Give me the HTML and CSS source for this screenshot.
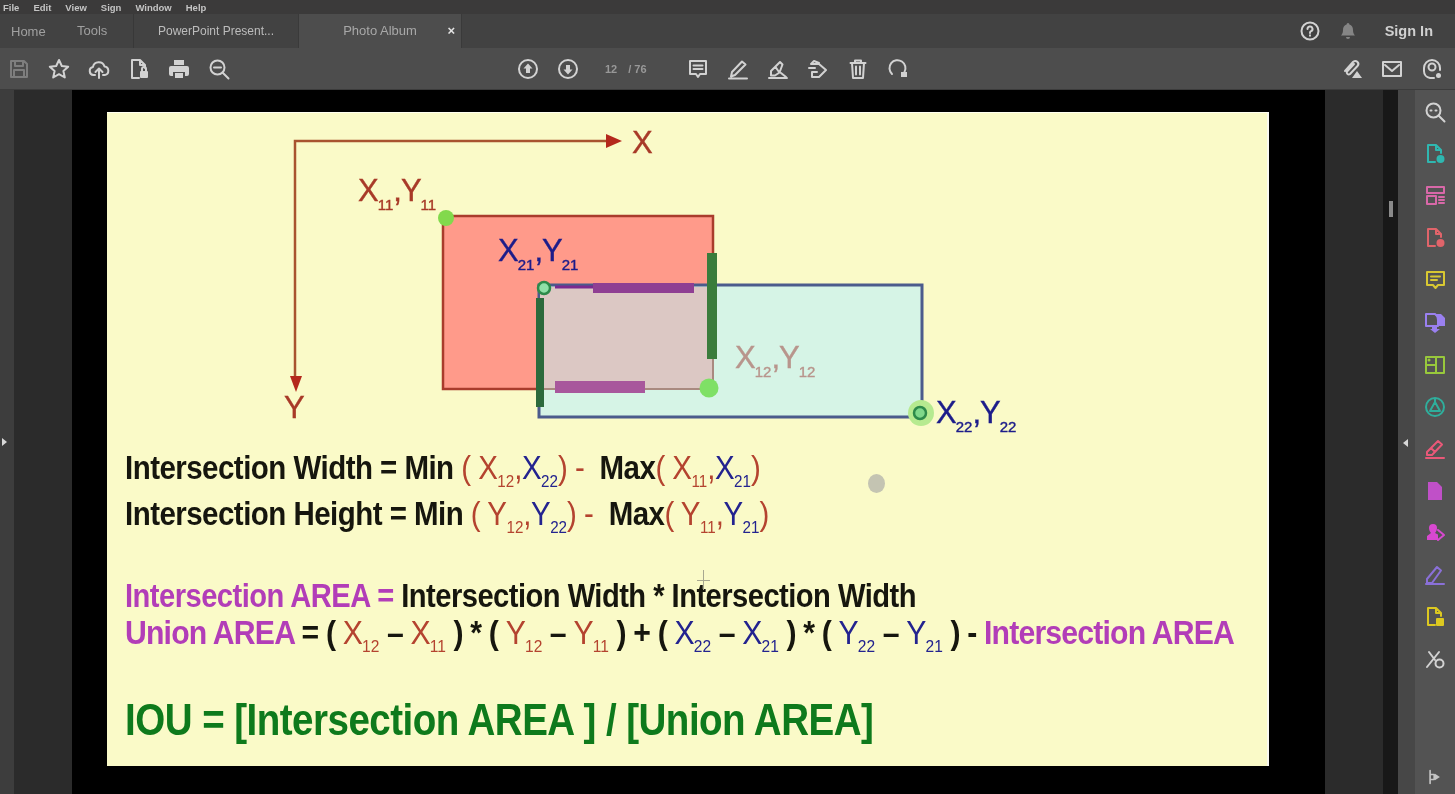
FILE: index.html
```html
<!DOCTYPE html>
<html lang="en">
<head>
    <meta charset="UTF-8">
    <title>Photo Album</title>
    <link rel="stylesheet" href="styles.css">
</head>
<body>
<div class="app">
    <div class="menubar">
        <span>File</span><span>Edit</span><span>View</span><span>Sign</span><span>Window</span><span>Help</span>
    </div>

    <div class="tabbar">
        <span class="nav-link">Home</span>
        <span class="nav-link">Tools</span>
        <div class="tab">PowerPoint Present...</div>
        <div class="tab tab-active">Photo Album<span class="tab-close">&times;</span></div>
        <div class="tab-right">
            <svg class="ic" viewBox="0 0 22 22"><circle cx="11" cy="11" r="8.5"/><path d="M8.5 9a2.5 2.5 0 1 1 3.6 2.2c-.8.4-1.1.9-1.1 1.8M11 15.2v.6"/></svg>
            <svg class="ic ic-bell" viewBox="0 0 22 22"><path class="solid" d="M11 3a1.400 1.400 0 0 1 1.400 1.500c2.400.7 3.600 2.700 3.600 5.500 0 3 .8 4 2 5.500H4c1.200-1.500 2-2.500 2-5.500 0-2.800 1.200-4.800 3.600-5.500A1.400 1.400 0 0 1 11 3zM9 17h4a2 2 0 0 1-4 0z"/></svg>
            <span class="sign-in">Sign In</span>
        </div>
    </div>

    <div class="toolbar">
        <div class="tool-group tool-left">
            <svg class="ic dim" viewBox="0 0 22 22"><path d="M3 3h13l3 3v13H3zM7 3v5h8V3M6 19v-7h10v7"/></svg>
            <svg class="ic" viewBox="0 0 22 22"><path d="M11 2l2.800 6 6.400.7-4.800 4.300 1.400 6.500L11 16.200l-5.800 3.300 1.400-6.500L1.800 8.700 8.200 8z"/></svg>
            <svg class="ic" viewBox="0 0 22 22"><path d="M7 17H5.500a4 4 0 0 1-.6-7.900 6 6 0 0 1 11.600-.6 4.300 4.300 0 0 1 .3 8.500H15M11 20v-9M7.500 14l3.500-3.500 3.500 3.500"/></svg>
            <svg class="ic" viewBox="0 0 22 22"><path d="M11 20H4V2h8l5 5v3M12 2v5h5"/><rect class="solid" x="12" y="13" width="8" height="7" rx="1"/><path d="M14 13v-2a2 2 0 0 1 4 0v2"/></svg>
            <svg class="ic" viewBox="0 0 22 22"><path class="solid" d="M6 2h10v5H6zM3 8h16a2 2 0 0 1 2 2v6a2 2 0 0 1-2 2h-2v-4H5v4H3a2 2 0 0 1-2-2v-6a2 2 0 0 1 2-2zM7 15h8v5H7z"/></svg>
            <svg class="ic" viewBox="0 0 22 22"><circle cx="9.500" cy="9.500" r="7"/><path d="M14.500 14.500L20.500 20.500M6 9.500h7"/></svg>
        </div>
        <div class="tool-group tool-center">
            <svg class="ic" viewBox="0 0 22 22"><circle cx="11" cy="11" r="9"/><path class="solid" d="M11 5.500l4.500 5H13v4.500H9v-4.500H6.500z"/></svg>
            <svg class="ic" viewBox="0 0 22 22"><circle cx="11" cy="11" r="9"/><path class="solid" d="M11 16.500l-4.500-5H9V7h4v4.500h2.500z"/></svg>
            <div class="page-count"><span>12</span><span>/ 76</span></div>
            <svg class="ic" viewBox="0 0 22 22"><path d="M3 3h16v13h-6l-2 3-2-3H3zM6.500 7.500h9M6.500 11h9"/></svg>
            <svg class="ic" viewBox="0 0 22 22"><path d="M5 14L15 3.500l3.500 3L8 17l-4 1.500zM2 20.500h18"/></svg>
            <svg class="ic" viewBox="0 0 22 22"><path d="M4 13l9-9 2.500 2.500-3 8-4.500 3H4zM8.500 9L12 14M14 15l5 4M2 20h18"/></svg>
            <svg class="ic" viewBox="0 0 22 22"><path d="M4 6h8l7 6-7 7H5v-5M4 6l3-3 5 2M2 10h6M5 14h5"/></svg>
            <svg class="ic" viewBox="0 0 22 22"><path d="M3.500 5h15M8 5V2.500h6V5M5 5l1 15h10l1-15M9 8.500v8M13 8.500v8"/></svg>
            <svg class="ic" viewBox="0 0 22 22"><path d="M5 16a8 8 0 1 1 12.500-2"/><path class="solid" d="M14 14h6v5h-6z"/></svg>
        </div>
        <div class="tool-group tool-right">
            <svg class="ic" viewBox="0 0 22 22"><path d="M4 13L12 4a3 3 0 0 1 4.500 4L9 16a2 2 0 0 1-3-2.500l7-7.500"/><path class="solid" d="M11 20l5-7 5 7z"/></svg>
            <svg class="ic" viewBox="0 0 22 22"><rect x="2" y="4" width="18" height="14"/><path d="M4 7l7 6 7-6"/></svg>
            <svg class="ic" viewBox="0 0 22 22"><path d="M13 20H9a7 7 0 0 1-6-7V10a8 8 0 0 1 16 0v2"/><circle cx="11" cy="9" r="3.500"/><circle class="solid" cx="17.500" cy="17.500" r="2.500"/></svg>
        </div>
    </div>

    <div class="workspace">
        <div class="rail-left"><span class="arrow-right"></span></div>
        <div class="gutter"></div>
        <div class="page-well">
            <div class="slide">
                <svg class="diagram" viewBox="107 112 1162 322">
                    <rect x="443" y="216" width="270" height="173" fill="#ff9a8a" stroke="#a93c2c" stroke-width="2.500"/>
                    <rect x="539" y="285" width="383" height="132" fill="#d6f4e6" stroke="#4b5b8c" stroke-width="3"/>
                    <rect x="540" y="287" width="173" height="102" fill="#dcc8c4"/>
                    <path d="M540 389H713V287" fill="none" stroke="#a98a80" stroke-width="2"/>
                    <path d="M295 385V141H612" fill="none" stroke="#a8532f" stroke-width="2.500"/>
                    <path d="M606 134l16 7-16 7zM290 376h12l-6 16z" fill="#b4281c"/>
                    <path d="M555 287H693" stroke="#7a2a90" stroke-width="3"/>
                    <rect x="593" y="283" width="101" height="10" fill="#8f3f93"/>
                    <rect x="555" y="381" width="90" height="12" fill="#a8579c"/>
                    <rect x="536" y="298" width="8" height="109" fill="#2c6a3c"/>
                    <rect x="707" y="253" width="10" height="106" fill="#3a7c3c"/>
                    <circle cx="446" cy="218" r="8" fill="#82d94c"/>
                    <circle cx="544" cy="288" r="6" fill="#8fe0a8" stroke="#2d8a4a" stroke-width="2.500"/>
                    <circle cx="709" cy="388" r="9.500" fill="#7fe066"/>
                    <circle cx="921" cy="413" r="13" fill="#b6ea90"/>
                    <circle cx="920" cy="413" r="6" fill="#7fd88a" stroke="#2d8a4a" stroke-width="2.500"/>

                    <text class="lbl red" x="632" y="153">X</text>
                    <text class="lbl red" x="284" y="418">Y</text>
                    <text class="lbl red" x="358" y="201">X<tspan class="sub" dy="9">11</tspan><tspan dy="-9">,Y</tspan><tspan class="sub" dy="9">11</tspan></text>
                    <text class="lbl navy" x="498" y="261">X<tspan class="sub" dy="9">21</tspan><tspan dy="-9">,Y</tspan><tspan class="sub" dy="9">21</tspan></text>
                    <text class="lbl faded" x="735" y="368">X<tspan class="sub" dy="9">12</tspan><tspan dy="-9">,Y</tspan><tspan class="sub" dy="9">12</tspan></text>
                    <text class="lbl navy" x="936" y="423">X<tspan class="sub" dy="9">22</tspan><tspan dy="-9">,Y</tspan><tspan class="sub" dy="9">22</tspan></text>
                </svg>

                <div class="formulas">
                    <p class="line">Intersection Width = Min <i class="r">( X<sub>12</sub>,</i><i class="b">X<sub>22</sub></i><i class="r">)</i> <i class="r">-</i>&nbsp; Max<i class="r">( X<sub>11</sub>,</i><i class="b">X<sub>21</sub></i><i class="r">)</i></p>
                    <p class="line">Intersection Height = Min <i class="r">( Y<sub>12</sub>,</i><i class="b">Y<sub>22</sub></i><i class="r">)</i> <i class="r">-</i>&nbsp; Max<i class="r">( Y<sub>11</sub>,</i><i class="b">Y<sub>21</sub></i><i class="r">)</i></p>
                </div>

                <div class="formulas areas">
                    <p class="line line-area"><i class="m">Intersection AREA =</i> Intersection Width * Intersection Width</p>
                    <p class="line line-union"><i class="m">Union AREA</i> = ( <i class="r">X<sub>12</sub></i> &ndash; <i class="r">X<sub>11</sub></i> ) * ( <i class="r">Y<sub>12</sub></i> &ndash; <i class="r">Y<sub>11</sub></i> ) + ( <i class="b">X<sub>22</sub></i> &ndash; <i class="b">X<sub>21</sub></i> ) * ( <i class="b">Y<sub>22</sub></i> &ndash; <i class="b">Y<sub>21</sub></i> ) - <i class="m">Intersection AREA</i></p>
                </div>

                <p class="iou">IOU = [Intersection AREA ] / [Union AREA]</p>
                <span class="cursor-dot"></span>
                <span class="cursor-cross"></span>
            </div>
        </div>
        <div class="gutter gutter-right"></div>
        <div class="gutter-dark"><span class="scroll-thumb"></span></div>
        <div class="rail-handle"><span class="arrow-left"></span></div>
        <div class="sidebar">
            <svg class="ic" viewBox="0 0 22 22"><circle cx="9.500" cy="9.500" r="7"/><path d="M14.500 14.500L20.500 20.500M6.500 9.500h1M11.500 9.500h1"/></svg>
            <svg class="ic c-teal" viewBox="0 0 22 22"><path d="M11 19H4V2h8l5 5v3M12 2v5h5"/><circle class="solid" cx="16.500" cy="16" r="4"/></svg>
            <svg class="ic c-pink" viewBox="0 0 22 22"><path d="M3 2h17v6H3zM3 11h9v8H3zM15 12h5M15 15h5M15 18h5"/></svg>
            <svg class="ic c-rose" viewBox="0 0 22 22"><path d="M11 19H4V2h8l5 5v3M12 2v5h5"/><circle class="solid" cx="16.500" cy="16" r="4"/></svg>
            <svg class="ic c-yellow" viewBox="0 0 22 22"><path d="M3 3h17v13h-6l-2.500 3-2.500-3H3zM7 7.500h9M7 11h6"/></svg>
            <svg class="ic c-violet" viewBox="0 0 22 22"><path d="M2 3h9l3 3v9H2z"/><path class="solid" d="M12 3h5l4 4v8h-7zM8 16h5v2h3l-5 4-5-4h2z"/></svg>
            <svg class="ic c-green" viewBox="0 0 22 22"><path d="M2 3h18v16H2zM12 3v16M2 11h10"/><circle class="solid" cx="5" cy="6" r="1.500"/></svg>
            <svg class="ic c-cyan" viewBox="0 0 22 22"><circle cx="11" cy="11" r="9"/><path d="M6 15l5-9 5 9zM11 3v3"/></svg>
            <svg class="ic c-coral" viewBox="0 0 22 22"><path d="M3 14L14 3l4 3.500L8 17H3zM7 10l4 4M2 20h18"/></svg>
            <svg class="ic c-purple" viewBox="0 0 22 22"><path class="solid" d="M4 2h9l5 5v13H4z"/></svg>
            <svg class="ic c-magenta" viewBox="0 0 22 22"><path class="solid" d="M9 2a4 4 0 0 1 4 4c0 2-1 4-2 5l3 1.500V18H3v-4l4-3C6 10 5 8 5 6a4 4 0 0 1 4-4z"/><path d="M14 8l6 5-6 5"/></svg>
            <svg class="ic c-lilac" viewBox="0 0 22 22"><path d="M3 15L13 3l4 3.500L8 19H3zM2 20h18"/></svg>
            <svg class="ic c-gold" viewBox="0 0 22 22"><path d="M11 19H4V2h8l5 5v3M12 2v5h5"/><rect class="solid" x="12" y="12" width="8" height="8" rx="1"/></svg>
            <svg class="ic" viewBox="0 0 22 22"><path d="M3 19L15 4M5 4l6 8"/><circle cx="15.500" cy="15.500" r="4"/></svg>
            <div class="sidebar-foot">
                <svg class="ic ic-small" viewBox="0 0 22 22"><path d="M5 3v16M5 8h5v6H5"/><path class="solid" d="M11 7l6 4-6 4z"/></svg>
            </div>
        </div>
    </div>
</div>
</body>
</html>
```

FILE: styles.css
```css
* {
    box-sizing: border-box;
}

body {
    margin: 0;
    background-color: #000;
    font-family: "Liberation Sans", Arial, sans-serif;
    overflow: hidden;
}

.app {
    width: 1455px;
    height: 794px;
    display: flex;
    flex-direction: column;
    overflow: hidden;
    /* the source is a soft video frame */
    filter: blur(0.6px);
}

/* Title strips */
.menubar {
    height: 14px;
    display: flex;
    align-items: center;
    gap: 14px;
    padding-left: 3px;
    background-color: #3b3a3a;
    color: #c4c4c4;
    font-size: 9.5px;
    font-weight: bold;
}

.tabbar {
    height: 34px;
    display: flex;
    align-items: center;
    background-color: #424242;
    color: #a0a0a0;
    font-size: 13px;
}

.nav-link {
    margin-left: 11px;
    width: 55px;
}

.nav-link + .nav-link {
    width: 57px;
    border-right: 1px solid #383838;
    height: 34px;
    line-height: 34px;
}

.tab {
    width: 165px;
    height: 34px;
    line-height: 34px;
    text-align: center;
    font-size: 12px;
    border-right: 1px solid #3a3a3a;
    color: #bcbcbc;
}

.tab-active {
    position: relative;
    width: 163px;
    background-color: #4d4d4d;
    font-size: 13px;
    color: #a8a8a8;
}

.tab-close {
    position: absolute;
    right: 6px;
    top: 0;
    color: #e4e4e4;
    font-size: 13px;
    font-weight: bold;
}

.tab-right {
    margin-left: auto;
    display: flex;
    align-items: center;
    padding-right: 22px;
}

.tab-right .ic-bell {
    margin-left: 16px;
    color: #858585;
}

.sign-in {
    margin-left: 26px;
    color: #d0d0d0;
    font-size: 14.5px;
    font-weight: bold;
}

/* Toolbar */
.toolbar {
    height: 42px;
    display: flex;
    align-items: center;
    padding-top: 1px;
    background-color: #4d4d4d;
    border-bottom: 1px solid #3c3c3c;
}

.tool-group {
    display: flex;
    align-items: center;
    gap: 18px;
}

.tool-left {
    padding-left: 8px;
    width: 517px;
}

.tool-center {
    width: 400px;
}

.tool-right {
    margin-left: auto;
    padding-right: 12px;
}

.page-count {
    display: flex;
    gap: 11px;
    width: 72px;
    margin: 0 -1px 0 1px;
    padding-left: 7px;
    color: #989898;
    font-size: 11px;
    font-weight: bold;
}

.ic {
    width: 22px;
    height: 22px;
    flex: none;
    fill: none;
    stroke: currentColor;
    stroke-width: 2;
    stroke-linejoin: round;
    stroke-linecap: round;
    color: #d2d2d2;
}

.ic .solid {
    fill: currentColor;
    stroke: none;
}

.dim {
    color: #7e7e7e;
}

.ic-small {
    width: 18px;
    height: 18px;
    color: #c4c4c4;
}

/* Document area */
.workspace {
    flex: 1;
    display: flex;
    min-height: 0;
}

.rail-left {
    width: 14px;
    display: flex;
    align-items: center;
    background-color: #3d3d3d;
}

.arrow-right {
    border-left: 5px solid #d8d8d8;
    border-top: 4px solid transparent;
    border-bottom: 4px solid transparent;
    margin-left: 2px;
}

.gutter {
    width: 58px;
    background-color: #2b2b2b;
}

.gutter-right {
    width: 58px;
}

.gutter-dark {
    width: 15px;
    padding-top: 111px;
    padding-left: 6px;
    background-color: #181818;
}

.scroll-thumb {
    display: block;
    width: 4px;
    height: 16px;
    background-color: #8a8a8a;
}

.page-well {
    width: 1253px;
    padding: 22px 0 0 35px;
    background-color: #000;
}

.slide {
    position: relative;
    width: 1162px;
    height: 654px;
    padding-top: 333px;
    background-color: #fafac8;
    box-shadow: inset -2px 0 0 #f8f8f0, inset 0 1px 0 #fffff0;
    color: #16160e;
}

.diagram {
    position: absolute;
    left: 0;
    top: 0;
    width: 1162px;
    height: 322px;
}

.lbl {
    font-size: 31px;
    font-family: "Liberation Sans", Arial, sans-serif;
    letter-spacing: -1px;
    stroke: currentColor;
    stroke-width: 0.4px;
}

.sub {
    font-size: 15px;
    letter-spacing: 0;
}

.red {
    fill: #a83a28;
    color: #a83a28;
}

.navy {
    fill: #1c1c8a;
    color: #1c1c8a;
}

.faded {
    fill: #b8958c;
    color: #b8958c;
}

.formulas {
    padding-left: 18px;
}

.line {
    margin: 0;
    font-size: 33px;
    font-weight: bold;
    line-height: 46px;
    letter-spacing: -0.6px;
    white-space: nowrap;
    transform: scaleX(0.894);
    transform-origin: left center;
}

.line i {
    font-style: normal;
    font-weight: normal;
}

.line sub {
    font-size: 17px;
    line-height: 0;
    letter-spacing: 0;
}

.line .r {
    color: #b4432f;
}

.line .b {
    color: #23238f;
}

.line .m {
    color: #b23db8;
    font-weight: bold;
}

.areas {
    margin-top: 40px;
}

.line-area {
    line-height: 37px;
    transform: scaleX(0.883);
}

.line-union {
    line-height: 37px;
    letter-spacing: -0.9px;
    transform: scaleX(0.915);
}

.iou {
    margin: 44px 0 0 18px;
    color: #0e7a1c;
    font-size: 44px;
    font-weight: bold;
    line-height: 50px;
    letter-spacing: -0.6px;
    white-space: nowrap;
    transform: scaleX(0.876);
    transform-origin: left center;
}

.cursor-dot {
    position: absolute;
    left: 761px;
    top: 362px;
    width: 17px;
    height: 19px;
    border-radius: 50%;
    background-color: #c4c4b2;
}

.cursor-cross {
    position: absolute;
    left: 590px;
    top: 458px;
    width: 13px;
    height: 20px;
    background: linear-gradient(#a8a890, #a8a890) center / 1px 100% no-repeat,
        linear-gradient(#a8a890, #a8a890) center / 100% 1px no-repeat;
}

/* Right side */
.rail-handle {
    position: relative;
    width: 17px;
    background-color: #474747;
}

.arrow-left {
    position: absolute;
    left: 5px;
    top: 349px;
    border-right: 5px solid #d8d8d8;
    border-top: 4px solid transparent;
    border-bottom: 4px solid transparent;
}

.sidebar {
    flex: 1;
    display: flex;
    flex-direction: column;
    align-items: center;
    gap: 20.1px;
    padding: 11px 0 8px;
    background-color: #535353;
}

.sidebar-foot {
    margin-top: auto;
    width: 100%;
    display: flex;
    justify-content: center;
}

.c-teal { color: #2fb7b0; }
.c-pink { color: #d868a8; }
.c-rose { color: #e0646a; }
.c-yellow { color: #d8c832; }
.c-violet { color: #9a80f0; }
.c-green { color: #98c83c; }
.c-cyan { color: #2fae9c; }
.c-coral { color: #ea5878; }
.c-purple { color: #c050c8; }
.c-magenta { color: #d848d0; }
.c-lilac { color: #8a70d8; }
.c-gold { color: #dcc820; }
```
